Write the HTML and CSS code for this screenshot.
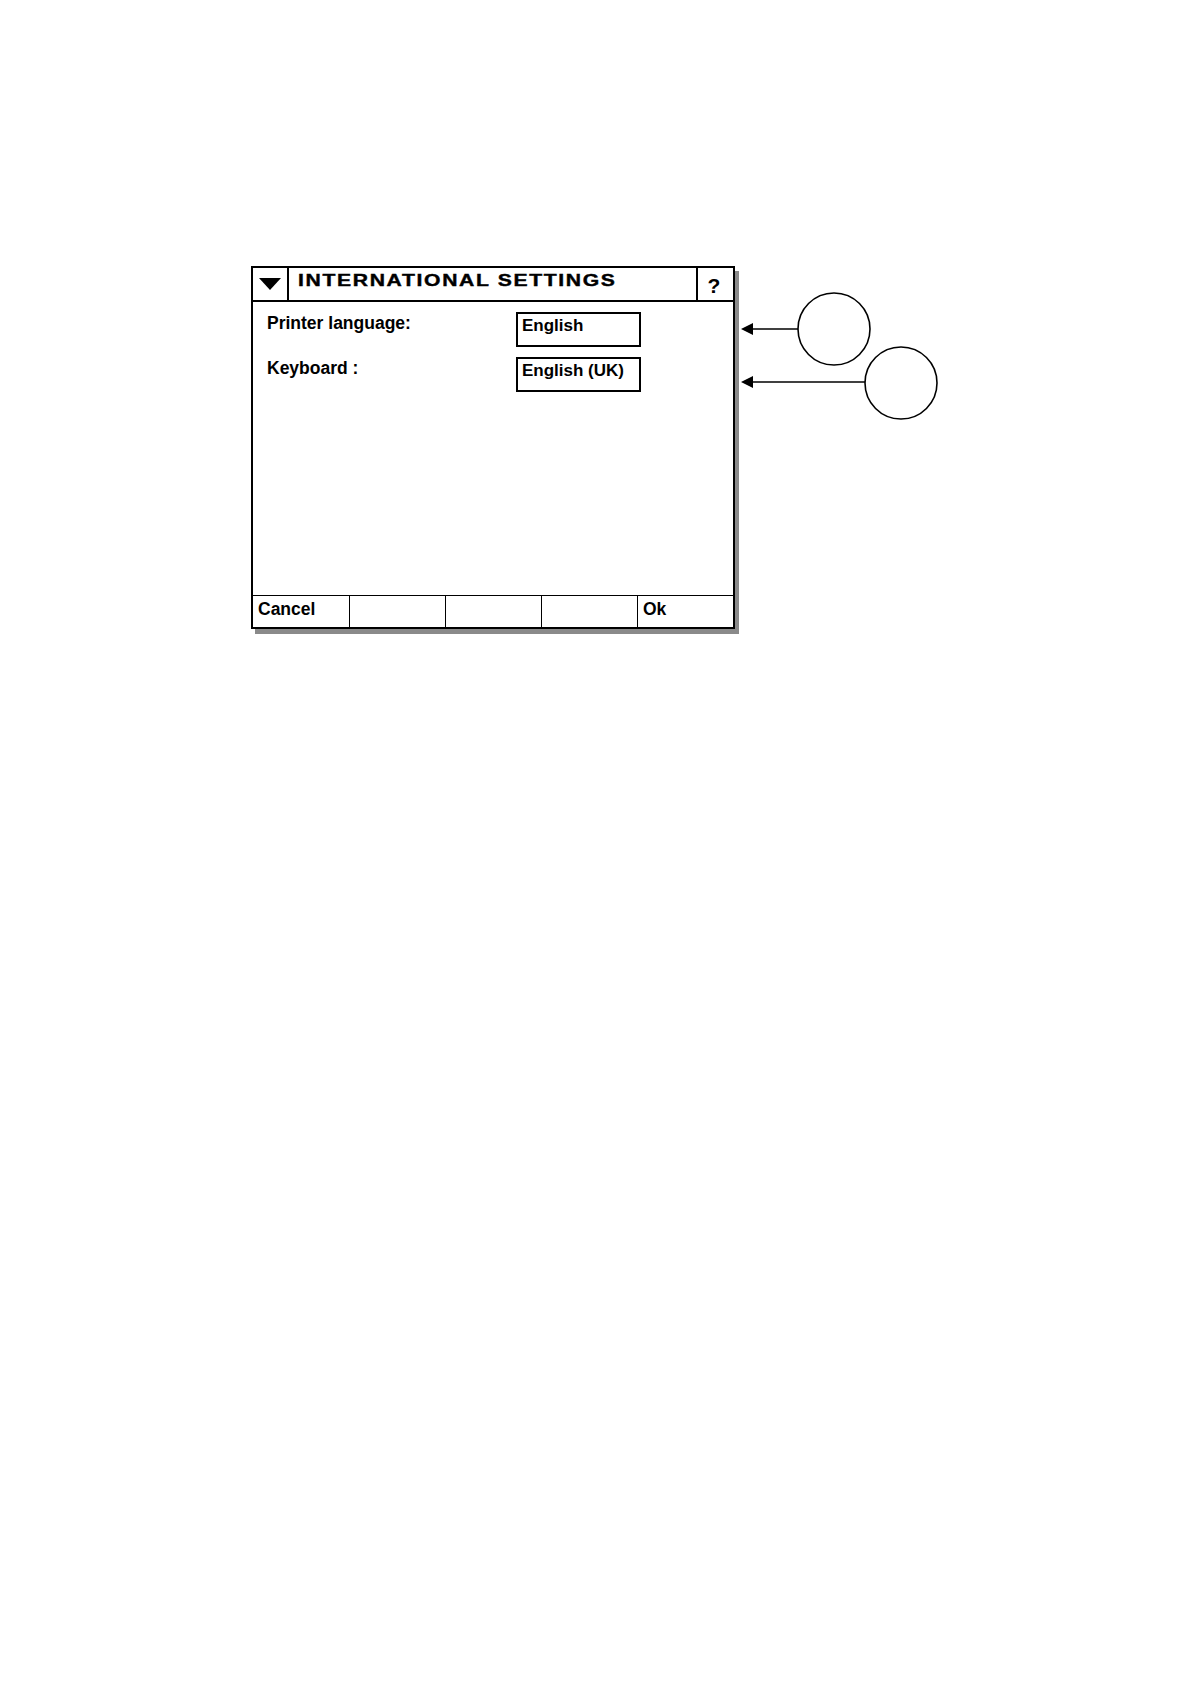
FILE: index.html
```html
<!DOCTYPE html>
<html lang="en">
<head>
<meta charset="utf-8">
<title>International Settings</title>
<link rel="stylesheet" href="styles.css">
</head>
<body>
<div class="page">
  <div class="dialog">
    <div class="header">
      <div class="menu-btn">
        <svg width="22" height="12" viewBox="0 0 22 12"><polygon points="0,0 22,0 11,12" fill="#000"/></svg>
      </div>
      <div class="title"><span class="title-text">INTERNATIONAL SETTINGS</span></div>
      <div class="help">?</div>
    </div>
    <div class="content">
      <div class="label">Printer language:</div>
      <div class="field">English</div>
      <div class="label">Keyboard :</div>
      <div class="field">English (UK)</div>
    </div>
    <div class="footer">
      <div class="fbtn">Cancel</div>
      <div class="fbtn"></div>
      <div class="fbtn"></div>
      <div class="fbtn"></div>
      <div class="fbtn">Ok</div>
    </div>
  </div>
</div>
<svg class="annotations" width="210" height="145" viewBox="0 0 210 145">
  <polygon points="5,44 17,38 17,50" fill="#000"/>
  <line x1="16" y1="44" x2="62" y2="44" stroke="#000" stroke-width="1.6"/>
  <circle cx="98" cy="44" r="36" fill="none" stroke="#000" stroke-width="1.6"/>
  <polygon points="5,97 17,91 17,103" fill="#000"/>
  <line x1="16" y1="97" x2="129" y2="97" stroke="#000" stroke-width="1.6"/>
  <circle cx="165" cy="98" r="36" fill="none" stroke="#000" stroke-width="1.6"/>
</svg>
</body>
</html>
```
FILE: styles.css
```css
html, body {
  margin: 0;
  padding: 0;
  background: #fff;
}

body {
  position: relative;
  width: 1190px;
  height: 1684px;
  font-family: "Liberation Sans", Arial, sans-serif;
  color: #000;
}

.page {
  padding: 266px 0 0 251px;
}

.dialog {
  width: 484px;
  height: 363px;
  box-sizing: border-box;
  border: 2px solid #000;
  background: #fff;
  box-shadow: 4px 5px 0 #8a8a8a;
  display: flex;
  flex-direction: column;
}

.header {
  display: flex;
  height: 34px;
  box-sizing: border-box;
  border-bottom: 2px solid #000;
}

.menu-btn {
  width: 36px;
  box-sizing: border-box;
  border-right: 2px solid #000;
  display: flex;
  align-items: center;
  justify-content: center;
}

.title {
  flex: 1;
  padding: 2px 0 0 9px;
  overflow: hidden;
}

.title-text {
  display: inline-block;
  font-family: "Liberation Sans", Arial, sans-serif;
  font-weight: bold;
  font-size: 16.5px;
  line-height: 20px;
  letter-spacing: 1.3px;
  white-space: nowrap;
  transform: scaleX(1.28);
  transform-origin: left center;
  -webkit-text-stroke: 0.4px #000;
}

.help {
  width: 37px;
  box-sizing: border-box;
  border-left: 2px solid #000;
  display: flex;
  align-items: center;
  justify-content: center;
  font-weight: bold;
  font-size: 21px;
  line-height: 20px;
  padding-top: 3px;
  padding-right: 3px;
}

.content {
  flex: 1;
  padding: 10px 0 0 14px;
  display: grid;
  grid-template-columns: 249px 125px;
  row-gap: 10px;
  align-content: start;
}

.label {
  font-weight: bold;
  font-size: 17.5px;
  line-height: 20px;
  padding-top: 1px;
  white-space: nowrap;
}

.field {
  height: 35px;
  box-sizing: border-box;
  border: 2px solid #000;
  padding: 2px 0 0 4px;
  font-weight: bold;
  font-size: 17px;
  line-height: 20px;
  white-space: nowrap;
}

.footer {
  height: 32px;
  box-sizing: border-box;
  border-top: 1px solid #000;
  display: grid;
  grid-template-columns: repeat(5, 1fr);
}

.fbtn {
  padding: 3px 0 0 5px;
  font-weight: bold;
  font-size: 17.5px;
  line-height: 20px;
}

.fbtn + .fbtn {
  border-left: 1px solid #000;
}

.annotations {
  position: absolute;
  left: 736px;
  top: 285px;
}
```
